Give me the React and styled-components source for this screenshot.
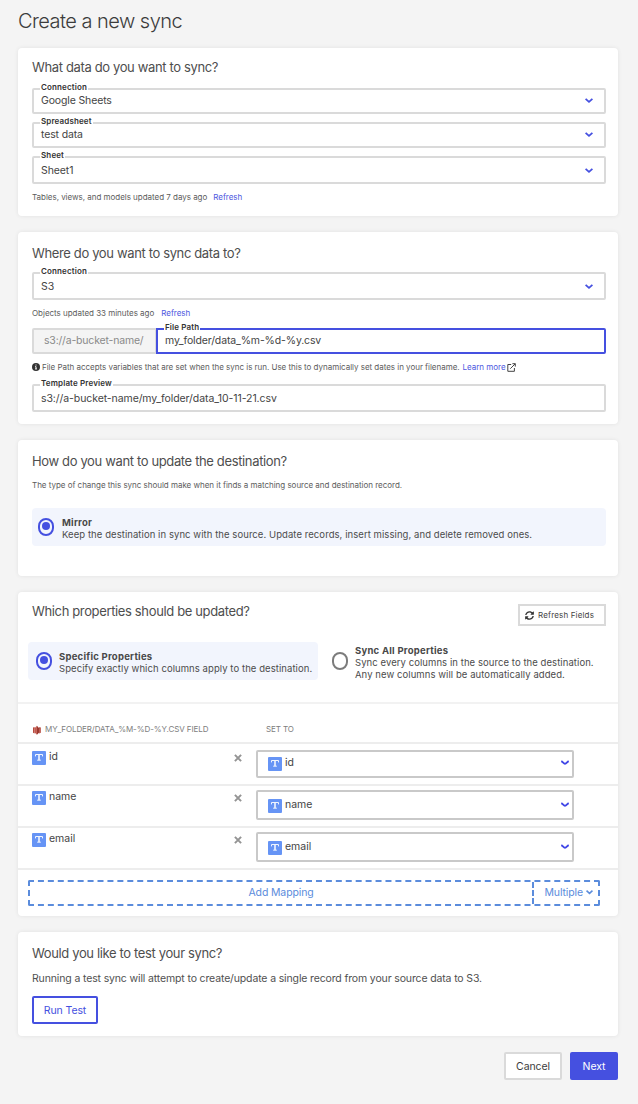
import React from "react";
import styled, { createGlobalStyle } from "styled-components";

const GlobalStyle = createGlobalStyle`
  *, *::before, *::after { box-sizing: border-box; }
  body {
    margin: 0;
    background: #f4f4f4;
    color: #484848;
    font-family: Inter, "Liberation Sans", sans-serif;
    font-size: 11px;
  }
  h1, h2, p { margin: 0; }
  button { font-family: inherit; margin: 0; padding: 0; }
  svg { display: block; flex: none; }
`;

const Page = styled.main`
  width: 638px;
  height: 1104px;
  padding: 8px 20px 0 18px;
  overflow: hidden;
`;

const Title = styled.h1`
  height: 40px;
  line-height: 26px;
  font-size: 20px;
  font-weight: 300;
  letter-spacing: -0.53px;
  color: #3c3c3c;
`;

const Card = styled.section`
  height: ${(p) => p.$height}px;
  margin-bottom: 16px;
  padding: 10px 12px 0 14px;
  background: #fff;
  border-radius: 4px;
  box-shadow: 0 0 4px rgba(0, 0, 0, 0.08);
`;

const Heading = styled.h2`
  height: 20px;
  line-height: ${(p) => (p.$raised ? 18 : 22)}px;
  font-size: 13px;
  font-weight: 400;
  letter-spacing: -0.36px;
  color: #4e4e4e;
  white-space: nowrap;
`;

const FieldBox = styled.div`
  position: relative;
  flex: 1;
  display: flex;
  align-items: center;
  justify-content: space-between;
  height: ${(p) => (p.$tall ? 28 : 26)}px;
  margin-top: ${(p) => p.$gap || 0}px;
  padding: 0 11px ${(p) => (p.$tall ? 0 : 1)}px 7px;
  border: 2px solid ${(p) => (p.$focused ? "#4550e0" : "#dadada")};
  border-radius: ${(p) => (p.$joined ? "0 2px 2px 0" : "2px")};
  background: #fff;
`;

const FieldLabel = styled.label`
  position: absolute;
  top: -8px;
  left: 6px;
  height: 10px;
  padding: 0 1px;
  line-height: 10px;
  font-size: 8px;
  font-weight: 600;
  letter-spacing: 0.14px;
  color: #333;
  background: #fff;
  white-space: nowrap;
`;

const FieldValue = styled.span`
  line-height: 14px;
  padding-top: ${(p) => (p.$tall ? 2 : 0)}px;
  font-size: 10.5px;
  letter-spacing: ${(p) => (p.$tall ? -0.08 : -0.14)}px;
  color: #444;
  white-space: nowrap;
`;

const Hint = styled.p`
  display: flex;
  align-items: center;
  height: 12px;
  margin-top: ${(p) => p.$gap}px;
  line-height: 12px;
  font-size: 8px;
  letter-spacing: -0.025px;
  color: #5c5c5c;
  white-space: nowrap;
`;

const HintText = styled.span`
  margin-left: 2px;
`;

const Link = styled.a`
  margin-left: ${(p) => p.$gap}px;
  color: #4d57e0;
`;

const InputGroup = styled.div`
  display: flex;
  margin-top: 9px;
`;

const Prefix = styled.div`
  width: 124px;
  height: 26px;
  padding-left: 10px;
  line-height: 22px;
  font-size: 10.5px;
  letter-spacing: -0.18px;
  color: #8a8a8a;
  background: #f4f4f4;
  border: 2px solid #dadada;
  border-right-width: 1px;
  border-radius: 2px 0 0 2px;
`;

const OptionList = styled.div`
  display: flex;
  gap: 6px;
  margin: ${(p) => p.$margin};
`;

const OptionCard = styled.label`
  display: flex;
  width: ${(p) => p.$width}px;
  height: 38px;
  padding: 8px 0 0 ${(p) => p.$indent}px;
  border-radius: 4px;
  background: ${(p) => (p.$selected ? "#f2f5fd" : "transparent")};
`;

const Radio = styled.span`
  display: flex;
  flex: none;
  justify-content: center;
  width: 16px;
  height: 18px;
  margin: 2px ${(p) => p.$gap}px 0 0;
  padding-top: 2px;
  border: 2px solid ${(p) => (p.$selected ? "#4550e0" : "#7c7c7c")};
  border-radius: 8px;

  &::after {
    content: "";
    width: 8px;
    height: 8px;
    border-radius: 50%;
    background: ${(p) => (p.$selected ? "#4550e0" : "transparent")};
  }
`;

const OptionText = styled.span`
  margin-top: ${(p) => p.$shift}px;
  line-height: 12px;
  font-size: 9.5px;
  letter-spacing: 0.07px;
  color: #4c4c4c;
  white-space: nowrap;

  strong {
    display: block;
    font-weight: 700;
    letter-spacing: 0.25px;
    color: #484848;
  }
`;

const CardHeader = styled.div`
  display: flex;
  justify-content: space-between;
  align-items: flex-start;
`;

const RefreshButton = styled.button`
  display: flex;
  align-items: center;
  gap: 4px;
  width: 88px;
  height: 22px;
  margin-top: 2px;
  padding-left: 5px;
  border: 2px solid #dadada;
  background: #fff;
  font-size: 8px;
  letter-spacing: 0.16px;
  color: #444;
`;

const MappingTable = styled.div`
  margin: 22px -12px 0 -14px;
  border-top: 2px solid #f2f2f2;
`;

const MappingHead = styled.div`
  display: flex;
  height: 40px;
  padding: 19px 0 0 14px;
  border-bottom: 2px solid #ededed;
  line-height: 12px;
  font-size: 8px;
  letter-spacing: -0.09px;
  color: #7d7d7d;
`;

const HeadCell = styled.div`
  display: flex;
  gap: 4px;
  width: ${(p) => p.$width}px;
  white-space: nowrap;
`;

const MappingRow = styled.div`
  display: flex;
  align-items: flex-start;
  height: 42px;
  padding: ${(p) => p.$top}px 0 0 14px;
  border-bottom: 2px solid #ededed;
`;

const SourceField = styled.div`
  display: flex;
  gap: 3px;
  width: 202px;
  margin-top: 1px;
`;

const BadgeBox = styled.span`
  display: flex;
  justify-content: center;
  width: 14px;
  height: 14px;
  flex: none;
  border-radius: 1px;
  background: #6694f5;
  padding-top: 3px;
`;

const FieldName = styled.span`
  line-height: 12px;
  font-size: 10.5px;
  letter-spacing: -0.02px;
  color: #444;
`;

const TargetSelect = styled.div`
  display: flex;
  align-items: flex-start;
  width: 318px;
  height: ${(p) => p.$height}px;
  margin-left: 14px;
  padding: ${(p) => p.$pad}px 3px 0 10px;
  gap: 3px;
  border: 2px solid #c9c9c9;
  border-radius: 2px;

  & > svg { margin: 3px 0 0 auto; }
`;

const RemoveIconBox = styled.span`
  width: 8px;
  margin-top: 4px;
`;

const AddBar = styled.div`
  display: flex;
  width: 572px;
  height: 26px;
  margin: 10px 0 0 10px;
  border: 2px dashed #5b8cdc;
  border-radius: 2px;
  line-height: 21px;
  font-size: 10.5px;
  letter-spacing: -0.13px;
  color: #5b8cdc;
`;

const AddMapping = styled.span`
  flex: 1;
  text-align: center;
`;

const AddMultiple = styled.span`
  display: flex;
  align-items: center;
  gap: 3px;
  width: 66px;
  padding: 0 0 1px 10.5px;
  border-left: 2px dashed #5b8cdc;
`;

const Paragraph = styled.p`
  margin: 9px 0 10px;
  line-height: 15px;
  font-size: 10.5px;
  letter-spacing: -0.14px;
  color: #505050;
`;

const Button = styled.button`
  width: ${(p) => p.$width}px;
  height: 28px;
  border: 2px solid ${(p) => (p.$kind === "plain" ? "#dadada" : "#4550e0")};
  border-radius: 2px;
  background: ${(p) => (p.$kind === "primary" ? "#4550e0" : "#fff")};
  color: ${(p) => ({ plain: "#3c3c3c", primary: "#fff", outline: "#4550e0" })[p.$kind]};
  font-size: 10.5px;
  letter-spacing: -0.1px;
`;

const Actions = styled.footer`
  display: flex;
  justify-content: flex-end;
  gap: 8px;
`;

function Chevron({ color = "#4550e0", size = 8, path = "M0.6 0.8 4 3.8 7.4 0.8" }) {
  return (
    <svg width={size} height={(size * 5) / 8} viewBox="0 0 8 5" fill="none">
      <path d={path} stroke={color} strokeWidth="1.8" />
    </svg>
  );
}

function InfoIcon() {
  return (
    <svg width="8" height="8" viewBox="0 0 8 8">
      <circle cx="4" cy="4" r="4" fill="#333" />
      <path d="M4 1.5v1M3.2 3.6H4v2M3 5.9h2" stroke="#fff" strokeWidth="1" fill="none" />
    </svg>
  );
}

const ExternalSvg = styled.svg`
  margin-left: 1px;
`;

function ExternalIcon() {
  return (
    <ExternalSvg width="9" height="9" viewBox="0 0 9 9" fill="none" stroke="#444" strokeWidth="1">
      <path d="M4.2 1.5H0.8v6.8h6.6V5M5.4 0.7h2.9v2.9M8.2 0.8 3.3 5.7" />
    </ExternalSvg>
  );
}

function RefreshIcon() {
  return (
    <svg width="9" height="9" viewBox="0 0 512 512" fill="#333">
      <path d="M370.7 133.3C339.5 104 298.900 88 255.800 88c-77.500.1-144.300 53.200-162.800 126.900-1.300 5.400-6.100 9.100-11.700 9.100H24.100c-7.500 0-13.200-6.800-11.800-14.200C33.900 94.900 134.800 8 256 8c66.400 0 126.800 26.100 171.300 68.700L463 41C478.100 25.900 504 36.600 504 57.900V192c0 13.300-10.700 24-24 24H345.900c-21.400 0-32.100-25.900-17-41l41.800-41.700zM32 296h134.100c21.400 0 32.100 25.900 17 41l-41.800 41.800c31.300 29.300 71.800 45.300 114.900 45.200 77.400-.1 144.300-53.100 162.800-126.800 1.300-5.400 6.100-9.200 11.700-9.200h57.300c7.500 0 13.200 6.800 11.800 14.200C478.100 417.100 377.200 504 256 504c-66.400 0-126.800-26.100-171.300-68.700L49 471c-15.100 15.100-41 4.400-41-16.900V320c0-13.300 10.700-24 24-24z" />
    </svg>
  );
}

const BucketSvg = styled.svg`
  margin-top: 2px;
`;

function BucketIcon() {
  return (
    <BucketSvg width="9" height="10" viewBox="0 0 9 10">
      <path d="M1 2.600 2.600 2v6.400L1 7.800zM8.800 2.600 7.200 2v6.400l1.600-.6z" fill="#b5483d" />
      <path d="M2.600 3.200 4.900 0.800V9.800L2.600 7.600z" fill="#c4594e" />
      <path d="M4.900 0.800 7.200 3.200v4.400L4.900 9.800z" fill="#9c382e" />
    </BucketSvg>
  );
}

function TypeBadge() {
  return (
    <BadgeBox>
      <svg width="8" height="7" viewBox="0 0 8 7" fill="none" stroke="#f1f5fe">
        <path d="M0.500 2.400V0.500H7.500V2.400" strokeWidth="1" />
        <path d="M4 0.500V6" strokeWidth="1.600" />
        <path d="M2.200 6.200H5.800" strokeWidth="1" />
      </svg>
    </BadgeBox>
  );
}

function RemoveIcon() {
  return (
    <RemoveIconBox>
      <svg width="8" height="8" viewBox="0 0 8 8">
        <path d="M0.900 0.900 7.100 7.100M7.100 0.900 0.900 7.100" stroke="#949494" strokeWidth="2" />
      </svg>
    </RemoveIconBox>
  );
}

function Field({ label, value, select, tall, ...box }) {
  return (
    <FieldBox $tall={tall} {...box}>
      <FieldLabel>{label}</FieldLabel>
      <FieldValue $tall={tall}>{value}</FieldValue>
      {select && <Chevron />}
    </FieldBox>
  );
}

const mappings = [
  { name: "id", top: 6, height: 28, pad: 5 },
  { name: "name", top: 4, height: 30, pad: 7 },
  { name: "email", top: 4, height: 30, pad: 7 },
];

export default function App() {
  return (
    <Page>
      <GlobalStyle />
      <Title>Create a new sync</Title>

      <Card $height={168}>
        <Heading $raised>What data do you want to sync?</Heading>
        <Field label="Connection" value="Google Sheets" select $gap={10} />
        <Field label="Spreadsheet" value="test data" select $gap={8} />
        <Field label="Sheet" value="Sheet1" select tall $gap={8} />
        <Hint $gap={7}>
          Tables, views, and models updated 7 days ago <Link $gap={6}>Refresh</Link>
        </Hint>
      </Card>

      <Card $height={192}>
        <Heading>Where do you want to sync data to?</Heading>
        <Field label="Connection" value="S3" select tall $gap={10} />
        <Hint $gap={7}>
          Objects updated 33 minutes ago <Link $gap={7}>Refresh</Link>
        </Hint>
        <InputGroup>
          <Prefix>s3://a-bucket-name/</Prefix>
          <Field label="File Path" value="my_folder/data_%m-%d-%y.csv" $focused $joined />
        </InputGroup>
        <Hint $gap={7}>
          <InfoIcon />
          <HintText>
            File Path accepts variables that are set when the sync is run. Use this to dynamically set dates in your filename.
          </HintText>
          <Link $gap={3}>Learn more</Link>
          <ExternalIcon />
        </Hint>
        <Field label="Template Preview" value="s3://a-bucket-name/my_folder/data_10-11-21.csv" tall $gap={11} />
      </Card>

      <Card $height={136}>
        <Heading>How do you want to update the destination?</Heading>
        <Hint $gap={9}>The type of change this sync should make when it finds a matching source and destination record.</Hint>
        <OptionList $margin="17px 0 0">
          <OptionCard $selected $width={574} $indent={6}>
            <Radio $selected $gap={8} />
            <OptionText $shift={1}>
              <strong>Mirror</strong>
              Keep the destination in sync with the source. Update records, insert missing, and delete removed ones.
            </OptionText>
          </OptionCard>
        </OptionList>
      </Card>

      <Card $height={324}>
        <CardHeader>
          <Heading $raised>Which properties should be updated?</Heading>
          <RefreshButton>
            <RefreshIcon />
            Refresh Fields
          </RefreshButton>
        </CardHeader>
        <OptionList $margin="16px 0 0 -4px">
          <OptionCard $selected $width={290} $indent={8}>
            <Radio $selected $gap={7} />
            <OptionText $shift={1}>
              <strong>Specific Properties</strong>
              Specify exactly which columns apply to the destination.
            </OptionText>
          </OptionCard>
          <OptionCard $width={280} $indent={8}>
            <Radio $gap={7} />
            <OptionText $shift={-5}>
              <strong>Sync All Properties</strong>
              Sync every columns in the source to the destination.
              <br />
              Any new columns will be automatically added.
            </OptionText>
          </OptionCard>
        </OptionList>
        <MappingTable>
          <MappingHead>
            <HeadCell $width={234}>
              <BucketIcon />
              MY_FOLDER/DATA_%M-%D-%Y.CSV FIELD
            </HeadCell>
            <HeadCell>SET TO</HeadCell>
          </MappingHead>
          {mappings.map((m) => (
            <MappingRow key={m.name} $top={m.top}>
              <SourceField>
                <TypeBadge />
                <FieldName>{m.name}</FieldName>
              </SourceField>
              <RemoveIcon />
              <TargetSelect $height={m.height} $pad={m.pad}>
                <TypeBadge />
                <FieldName>{m.name}</FieldName>
                <Chevron color="#3f45e6" path="M0.3 1.1C1.6 1.7 2.7 3.9 4 3.9S6.400 1.700 7.700 1.100" />
              </TargetSelect>
            </MappingRow>
          ))}
          <AddBar>
            <AddMapping>Add Mapping</AddMapping>
            <AddMultiple>
              Multiple
              <Chevron color="#5b8cdc" size={7} />
            </AddMultiple>
          </AddBar>
        </MappingTable>
      </Card>

      <Card $height={104}>
        <Heading>Would you like to test your sync?</Heading>
        <Paragraph>Running a test sync will attempt to create/update a single record from your source data to S3.</Paragraph>
        <Button $kind="outline" $width={66}>Run Test</Button>
      </Card>

      <Actions>
        <Button $kind="plain" $width={58}>Cancel</Button>
        <Button $kind="primary" $width={48}>Next</Button>
      </Actions>
    </Page>
  );
}
